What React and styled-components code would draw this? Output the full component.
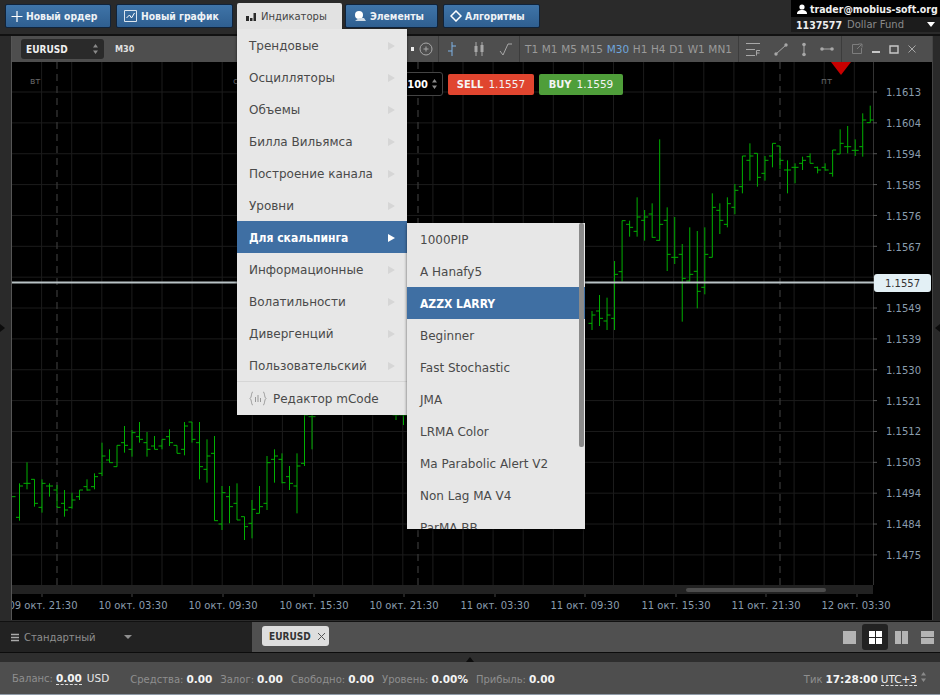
import React from "react";
import styled, { createGlobalStyle } from "styled-components";

const GlobalStyle = createGlobalStyle`
  html, body { margin: 0; padding: 0; background: #2b2b2b; }
  body { font-family: "DejaVu Sans", "Liberation Sans", sans-serif; }
`;

const boldFont = `"DejaVu Sans Condensed", "DejaVu Sans", sans-serif`;

// [high, low, open, close] measured on the picture
const leftBars = [
  [320, 320, 320, 320], [280, 392, 382, 288], [217, 298, 280, 280], [268, 350, 268, 340], [268, 368, 352, 280],
  [280, 320, 288, 288], [285, 352, 300, 352], [300, 380, 340, 360], [308, 356, 352, 330], [300, 330, 320, 300],
  [268, 302, 290, 300], [250, 298, 290, 260], [158, 258, 250, 198], [178, 218, 210, 218], [166, 230, 230, 166],
  [108, 188, 158, 166], [120, 200, 178, 128], [96, 158, 140, 148], [126, 200, 158, 178], [138, 178, 168, 178],
  [148, 178, 168, 148], [118, 168, 140, 158], [166, 190, 166, 190], [96, 196, 178, 108], [96, 158, 96, 148],
  [96, 268, 158, 230], [148, 278, 238, 198], [138, 392, 190, 392], [288, 420, 402, 308], [288, 400, 320, 350],
];
const midBars = [
  [820, 930, 880, 930], [920, 990, 920, 950], [870, 985, 940, 898], [828, 910, 910, 890], [738, 900, 880, 758],
  [718, 818, 748, 738], [730, 820, 748, 818], [768, 840, 800, 820], [730, 910, 828, 768], [610, 768, 760, 615],
  [610, 718, 620, 620],
];
const rightBars = [
  [663, 720, 700, 675], [615, 708, 663, 685], [623, 720, 693, 675], [513, 720, 685, 553], [392, 575, 545, 392],
  [392, 440, 403, 412], [322, 440, 424, 381], [360, 452, 391, 381], [340, 443, 372, 442], [148, 452, 451, 403],
  [352, 543, 391, 493], [381, 522, 502, 502], [462, 695, 493, 565], [412, 575, 573, 553], [423, 655, 544, 604],
  [412, 613, 592, 493], [310, 502, 502, 352], [340, 432, 361, 391], [322, 412, 403, 341], [282, 373, 352, 301],
  [198, 310, 290, 198], [160, 272, 211, 198], [190, 290, 190, 262], [198, 272, 250, 211], [160, 232, 198, 160],
  [168, 238, 168, 211], [211, 310, 240, 240], [220, 280, 232, 232], [200, 240, 220, 211], [190, 220, 200, 220],
  [230, 250, 232, 240], [220, 242, 232, 240], [180, 260, 250, 180], [118, 192, 192, 160], [108, 190, 170, 170],
  [148, 198, 181, 181], [70, 200, 170, 90], [47, 98, 98, 90],
];

const toBars = (list, x0, step, y0) =>
  list.map((b) => b.map((v) => y0 + v / 3)).map((b, i) => ({ x: x0 + step * i, b }));

const allBars = [
  ...toBars(leftBars, 12, 7.5, 390),
  ...toBars(midBars, 237, 7.5, 210),
  ...toBars(rightBars, 592, 7.52, 90),
  { x: 396, b: [413, 420, 415, 415] },
  { x: 403.5, b: [413, 425, 415, 415] },
];

const prices = [
  ["1.1613", 92], ["1.1604", 123], ["1.1594", 154], ["1.1585", 185], ["1.1576", 216], ["1.1567", 247],
  ["1.1549", 308], ["1.1539", 339], ["1.1530", 370], ["1.1521", 401], ["1.1512", 431], ["1.1503", 462],
  ["1.1494", 493], ["1.1484", 524], ["1.1475", 555],
];
const times = [
  ["09 окт. 21:30", 43], ["10 окт. 03:30", 133], ["10 окт. 09:30", 223], ["10 окт. 15:30", 314], ["10 окт. 21:30", 404],
  ["11 окт. 03:30", 495], ["11 окт. 09:30", 585], ["11 окт. 15:30", 676], ["11 окт. 21:30", 766], ["12 окт. 03:30", 856],
];
const gridX = Array.from({ length: 29 }, (_, i) => 11.5 + i * 30.1);
const gridY = Array.from({ length: 16 }, (_, i) => 92 + i * 30.86);
const timeframes = ["T1", "M1", "M5", "M15", "M30", "H1", "H4", "D1", "W1", "MN1"];
const mainItems = ["Трендовые", "Осцилляторы", "Объемы", "Билла Вильямса", "Построение канала", "Уровни", "Для скальпинга", "Информационные", "Волатильности", "Дивергенций", "Пользовательский"];
const subItems = ["1000PIP", "A Hanafy5", "AZZX LARRY", "Beginner", "Fast Stochastic", "JMA", "LRMA Color", "Ma Parabolic Alert V2", "Non Lag MA V4", "ParMA BB"];

const Page = styled.div`
  position: relative;
  width: 940px;
  height: 695px;
  overflow: hidden;
  display: flex;
  flex-direction: column;
  background: #2b2b2b;
`;

const TopBar = styled.div`
  height: 34px;
  display: flex;
  align-items: flex-start;
  padding-left: 5px;
  background: #2a2a2a;
  border-bottom: 2px solid #111;
`;

const TopButton = styled.div`
  box-sizing: border-box;
  width: ${(p) => p.$w}px;
  margin: 4px ${(p) => p.$gap || 0}px 0 0;
  height: 24px;
  display: flex;
  align-items: center;
  gap: 3px;
  padding-left: ${(p) => p.$pad || 6}px;
  font-family: ${boldFont};
  font-size: 10.3px;
  font-weight: 700;
  white-space: nowrap;
  color: #eef2f6;
  background: linear-gradient(#3f74a8, #2f5f90);
  border: 1px solid #10233a;
  border-radius: 2px;
`;

const OpenButton = styled(TopButton)`
  background: #e2e2e2;
  border: none;
  border-radius: 2px 2px 0 0;
  margin-top: 3px;
  height: 26px;
  gap: 4px;
  font-family: "DejaVu Sans", sans-serif;
  font-size: 10px;
  font-weight: 400;
  color: #444;
  position: relative;
  z-index: 6;
`;

const Account = styled.div`
  margin-left: auto;
  width: 149px;
  height: 32px;
  background: #1c1c1c;
  color: #f0f0f0;
  font-family: ${boldFont};
`;

const AccountMail = styled.div`
  height: 17px;
  display: flex;
  align-items: center;
  gap: 3px;
  padding-left: 6px;
  background: #000;
  font-weight: 700;
  font-size: 10.5px;
  white-space: nowrap;
`;

const AccountRow = styled.div`
  height: 15px;
  display: flex;
  align-items: center;
  padding: 0 5px;
  gap: 5px;
  font-size: 10.5px;
  white-space: nowrap;
  b { color: #eee; }
  span { color: #8a8a8a; font-family: "DejaVu Sans", sans-serif; font-size: 10px; }
  i { margin-left: auto; width: 0; height: 0; border: 4px solid transparent; border-top: 5px solid #fff; border-bottom: 0; }
`;

const Middle = styled.div`
  flex: 1;
  display: flex;
  min-height: 0;
`;

const Strip = styled.div`
  width: ${(p) => p.$w}px;
  flex: none;
  background: #2a2a2a;
  display: flex;
  align-items: center;
  justify-content: ${(p) => (p.$right ? "flex-end" : "flex-start")};
  border-right: ${(p) => (p.$right ? "none" : "1px solid #555")};
  border-left: ${(p) => (p.$right ? "1px solid #444" : "none")};
  box-sizing: border-box;
  height: 584px;
`;

const StripArrow = styled.i`
  width: 0;
  height: 0;
  border: 4px solid transparent;
  ${(p) => (p.$right ? "border-right: 5px solid #0c0c0c; border-left: 0;" : "border-left: 5px solid #0c0c0c; border-right: 0;")}
`;

const Window = styled.div`
  flex: 1;
  display: flex;
  flex-direction: column;
  position: relative;
`;

const Toolbar = styled.div`
  height: 26px;
  display: flex;
  align-items: center;
  background: #4e4e4e;
  color: #9d9d9d;
  font-size: 11px;
`;

const SymbolSelect = styled.div`
  box-sizing: border-box;
  width: 83px;
  height: 20px;
  margin-left: 9px;
  padding: 0 5px;
  display: flex;
  align-items: center;
  justify-content: space-between;
  background: #2a2a2a;
  border-radius: 3px;
  color: #f0f0f0;
  font-family: ${boldFont};
  font-size: 10px;
  font-weight: 700;
`;

const Period = styled.div`
  margin-left: 11px;
  font-family: ${boldFont};
  font-size: 9px;
  font-weight: 700;
  color: #e0e0e0;
`;

const ToolGroup = styled.div`
  box-sizing: border-box;
  width: ${(p) => p.$w}px;
  height: 26px;
  display: flex;
  align-items: center;
  justify-content: ${(p) => p.$justify || "space-around"};
  border-left: ${(p) => (p.$plain ? "none" : "1px solid #3c3c3c")};
  margin-left: ${(p) => (p.$auto ? "auto" : 0)};
  padding: ${(p) => p.$pad || "0"};
`;

const Frame = styled.span`
  font-size: 10.5px;
  color: ${(p) => (p.$active ? "#6fa6dc" : "#9a9a9a")};
`;

const Chart = styled.svg`
  display: block;
  width: 920px;
  height: 558px;
  background: #000;
`;

const OrderWidget = styled.div`
  position: absolute;
  left: 338px;
  top: 36px;
  display: flex;
  align-items: center;
  gap: 5px;
  font-family: ${boldFont};
  font-size: 11px;
  font-weight: 700;
  color: #fff;
`;

const Amount = styled.div`
  box-sizing: border-box;
  width: 93px;
  height: 24px;
  display: flex;
  align-items: center;
  justify-content: flex-end;
  gap: 3px;
  padding-right: 4px;
  background: #000;
  border: 1px solid #444;
  border-radius: 3px;
`;

const TradeButton = styled.div`
  box-sizing: border-box;
  width: ${(p) => p.$w}px;
  height: 21px;
  display: flex;
  align-items: center;
  justify-content: center;
  gap: 5px;
  background: ${(p) => p.$color};
  border-radius: 2px;
  color: #f4f4f4;
  span { font-weight: 400; font-family: "DejaVu Sans", sans-serif; font-size: 10.5px; }
`;

const PriceTag = styled.div`
  position: absolute;
  left: 862px;
  top: 238px;
  width: 57px;
  height: 18px;
  display: flex;
  align-items: center;
  justify-content: center;
  background: #e3f0f5;
  border-radius: 3px;
  font-size: 10px;
  color: #333;
`;

const Menu = styled.div`
  position: absolute;
  z-index: 5;
  left: ${(p) => p.$left}px;
  top: ${(p) => p.$top}px;
  width: ${(p) => p.$w}px;
  height: ${(p) => p.$h}px;
  background: #e7e7e7;
  box-shadow: 0 1px 3px rgba(0, 0, 0, 0.6);
  overflow: hidden;
  font-size: 12px;
  color: #4a4a4a;
`;

const MenuItem = styled.div`
  height: 32px;
  display: flex;
  align-items: center;
  padding: 2px 12px 0 ${(p) => p.$pad}px;
  justify-content: space-between;
  box-sizing: border-box;
  background: ${(p) => (p.$active ? "#3f6fa3" : "transparent")};
  color: ${(p) => (p.$active ? "#fff" : "#4a4a4a")};
  font-family: ${(p) => (p.$active ? boldFont : "inherit")};
  font-weight: ${(p) => (p.$active ? 700 : 400)};
`;

const Arrow = styled.i`
  width: 0;
  height: 0;
  border: 4px solid transparent;
  border-left: 7px solid ${(p) => (p.$active ? "#fff" : "#d6d6d6")};
  border-right: 0;
`;

const MenuFooter = styled.div`
  height: 33px;
  display: flex;
  align-items: center;
  gap: 6px;
  padding-left: 12px;
  border-top: 1px solid #d6d6d6;
`;

const SubScroll = styled.div`
  position: absolute;
  right: 1px;
  top: 0;
  width: 5px;
  height: 224px;
  background: #8a8a8a;
  border-radius: 2px;
`;

const TabBar = styled.div`
  height: 31px;
  display: flex;
  border-top: 1px solid #111;
  box-sizing: border-box;
  background: #505050;
`;

const Workspace = styled.div`
  width: 252px;
  display: flex;
  align-items: center;
  gap: 5px;
  padding-left: 11px;
  box-sizing: border-box;
  background: #222;
  color: #8f8f8f;
  font-size: 10px;
  i { margin-left: 23px; width: 0; height: 0; border: 4px solid transparent; border-top: 4px solid #8f8f8f; border-bottom: 0; }
`;

const Tab = styled.div`
  box-sizing: border-box;
  width: 67px;
  height: 20px;
  margin: 4px 0 0 10px;
  padding-left: 7px;
  display: flex;
  align-items: center;
  gap: 6px;
  background: #dedede;
  border-radius: 3px;
  font-family: ${boldFont};
  font-size: 10px;
  font-weight: 700;
  color: #333;
`;

const LayoutButtons = styled.div`
  margin-left: auto;
  display: flex;
  align-items: center;
`;

const LayoutButton = styled.div`
  width: 26px;
  height: 26px;
  display: flex;
  align-items: center;
  justify-content: center;
  border-radius: 3px;
  background: ${(p) => (p.$active ? "#222" : "transparent")};
`;

const Divider = styled.div`
  height: 10px;
  background: #2e2e2e;
  border-top: 1px solid #0c0c0c;
  box-sizing: border-box;
  display: flex;
  justify-content: center;
  align-items: flex-end;
  i { width: 0; height: 0; border: 4px solid transparent; border-bottom: 5px solid #0c0c0c; border-top: 0; }
`;

const StatusBar = styled.div`
  height: 33px;
  display: flex;
  align-items: center;
  padding: 1px 0 0 12px;
  box-sizing: border-box;
  background: #4e4e4e;
  border-bottom: 1px solid #8f9aa6;
  font-size: 10px;
  color: #8f8f8f;
`;

const Stat = styled.div`
  display: flex;
  align-items: baseline;
  gap: 3px;
  margin-right: ${(p) => p.$gap || 8}px;
  margin-left: ${(p) => (p.$push ? "auto" : 0)};
  b { color: #f4f4f4; font-size: 10.5px; }
`;

const Dashed = styled.b`
  border-bottom: 1px dashed #ddd;
  font-weight: ${(p) => (p.$thin ? 400 : 700)};
  color: #f4f4f4;
`;

const Unit = styled.span`
  margin-left: 2px;
  color: #e8e8e8;
  font-size: 10.5px;
`;

const Spinner = () => (
  <svg width="7" height="12" viewBox="0 0 7 12">
    <path d="M3.5 1L6 4.5H1zM3.5 11L1 7.5h5z" fill="#8a8a8a" />
  </svg>
);

const stroke = { fill: "none", stroke: "#a8a8a8", strokeWidth: 1 };

const App = () => (
  <Page>
    <GlobalStyle />
    <TopBar>
      <TopButton $w={106} $gap={5} $pad={5}>
        <svg width="12" height="14" viewBox="0 0 12 14"><path d="M6 2v11M.5 7.500h11" stroke="#fff" strokeWidth="1.2" /></svg>
        Новый ордер
      </TopButton>
      <TopButton $w={117} $gap={4} $pad={7}>
        <svg width="14" height="13" viewBox="0 0 14 13"><path d="M.5.5h12v11H.5z" fill="none" stroke="#dde6ee" /><path d="M2.5 8l3-3 2 3 3-5" fill="none" stroke="#fff" /></svg>
        Новый график
      </TopButton>
      <OpenButton $w={105} $gap={3} $pad={8}>
        <svg width="12" height="12" viewBox="0 0 12 12"><path d="M1 6h3v5H1zM5 8h2.5v3H5zM8.500 3H11v8H8.500z" fill="#2a2a2a" /></svg>
        Индикаторы
      </OpenButton>
      <TopButton $w={93} $gap={5} $pad={7}>
        <svg width="14" height="13" viewBox="0 0 14 13"><circle cx="6" cy="5" r="4" fill="#fff" /><path d="M2 11h11l-2-3H6z" fill="#cfdbe6" /></svg>
        Элементы
      </TopButton>
      <TopButton $w={97} $pad={6}>
        <svg width="12" height="12" viewBox="0 0 12 12"><path d="M6 1l5 5-5 5-5-5z" fill="none" stroke="#fff" strokeWidth="1.5" /></svg>
        Алгоритмы
      </TopButton>
      <Account>
        <AccountMail>
          <svg width="10" height="10" viewBox="0 0 10 10"><circle cx="5" cy="3" r="2.6" fill="#fff" /><path d="M0 10c0-3 2-4 5-4s5 1 5 4z" fill="#fff" /></svg>
          trader@mobius-soft.org
        </AccountMail>
        <AccountRow>
          <b>1137577</b>
          <span>Dollar Fund</span>
          <i />
        </AccountRow>
      </Account>
    </TopBar>
    <Middle>
      <Strip $w={12}><StripArrow /></Strip>
      <Window>
        <Toolbar>
          <SymbolSelect>EURUSD <Spinner /></SymbolSelect>
          <Period>M30</Period>
          <ToolGroup $auto $plain $w={30} $justify="flex-start">
            <svg width="30" height="16" viewBox="0 0 30 16">
              <path d="M3 6h3v4H3z" fill="#eee" />
              <circle cx="18" cy="8" r="6" {...stroke} />
              <path d="M18 5.500v5M15.500 8h5" {...stroke} />
            </svg>
          </ToolGroup>
          <ToolGroup $w={81}>
            <svg width="14" height="16" viewBox="0 0 14 16"><path d="M7 1v14M3 10h4M7 5h4" fill="none" stroke="#7fb2e5" /></svg>
            <svg width="14" height="16" viewBox="0 0 14 16"><path d="M4 1v14M10 1v14" stroke="#a8a8a8" /><path d="M2.500 5h3v6h-3zM8.500 4h3v7h-3z" fill="#a8a8a8" /></svg>
            <svg width="14" height="16" viewBox="0 0 14 16"><path d="M1 10l3 4 5-11h4" {...stroke} /></svg>
          </ToolGroup>
          <ToolGroup $w={219} $pad="0 6px 0 5px" $justify="space-between">
            {timeframes.map((t) => (
              <Frame key={t} $active={t === "M30"}>{t}</Frame>
            ))}
          </ToolGroup>
          <ToolGroup $w={103} $pad="0 7px 0 6px" $justify="space-between">
            <svg width="16" height="15" viewBox="0 0 16 15"><path d="M1 1.500h14M1 7.500h9M1 13.500h9" {...stroke} /><path d="M11.500 13.500v-5h3.500M11.500 11h3" {...stroke} /></svg>
            <svg width="16" height="15" viewBox="0 0 16 15"><path d="M3 12l10-9" {...stroke} /><circle cx="3" cy="12" r="1.700" fill="#a8a8a8" /><circle cx="13" cy="3" r="1.700" fill="#a8a8a8" /></svg>
            <svg width="8" height="15" viewBox="0 0 8 15"><path d="M4 2v11" {...stroke} /><circle cx="4" cy="2.500" r="1.800" fill="#a8a8a8" /><circle cx="4" cy="12.500" r="1.800" fill="#a8a8a8" /></svg>
            <svg width="14" height="8" viewBox="0 0 14 8"><path d="M2 4h10" {...stroke} /><circle cx="2" cy="4" r="1.800" fill="#a8a8a8" /><circle cx="12" cy="4" r="1.800" fill="#a8a8a8" /></svg>
          </ToolGroup>
          <ToolGroup $w={91} $pad="0 15px 0 9px" $justify="space-between">
            <svg width="12" height="12" viewBox="0 0 12 12"><path d="M8 1.500H1.500v9h9V5M6 6l5-5M7.500 1H11v3.500" fill="none" stroke="#7d7d7d" /></svg>
            <svg width="10" height="10" viewBox="0 0 10 10"><path d="M1 8h8" stroke="#c8c8c8" strokeWidth="2" /></svg>
            <svg width="10" height="10" viewBox="0 0 10 10"><path d="M1 2h8v7H1z" fill="none" stroke="#c8c8c8" strokeWidth="1.400" /></svg>
            <svg width="10" height="10" viewBox="0 0 10 10"><path d="M1.500 1.500l7 7M8.500 1.500l-7 7" stroke="#a8a8a8" /></svg>
          </ToolGroup>
        </Toolbar>
        <Chart viewBox="12 62 920 558">
          {gridX.map((x) => <path key={x} d={`M${x} 62V585`} stroke="#1c1c1c" />)}
          {gridY.map((y) => <path key={y} d={`M12 ${y}H873`} stroke="#1c1c1c" />)}
          {[57, 418, 780].map((x) => <path key={x} d={`M${x} 62V585`} stroke="#3a3a3a" strokeDasharray="7 5" strokeWidth="1.200" />)}
          <path d="M873.500 62V585" stroke="#333" />
          {gridY.map((y) => <path key={y} d={`M873 ${y}h4`} stroke="#555" />)}
          {allBars.map(({ x, b }) => (
            <path key={`${x}-${b[0]}`} d={`M${x} ${b[0]}V${b[1]}M${x - 3.500} ${b[2]}H${x}M${x} ${b[3]}H${x + 3.500}`} stroke="#00b000" fill="none" />
          ))}
          <path d="M12 282.500H874" stroke="#b9c3c6" strokeWidth="2" />
          <path d="M831 62h20l-10 13z" fill="#c80000" />
          <text x="30" y="84" fill="#666" fontSize="9">вт</text>
          <text x="233" y="84" fill="#666" fontSize="9">ср</text>
          <text x="821" y="84" fill="#666" fontSize="9">пт</text>
          <rect x="12" y="585" width="861" height="9" fill="#222" />
          <rect x="686" y="588" width="140" height="4" rx="2" fill="#4d4d4d" />
          {[42, 132, 223, 314, 404, 495, 585, 676, 766, 857].map((x) => <path key={x} d={`M${x} 594v3`} stroke="#444" />)}
          {prices.map(([p, y]) => (
            <text key={p} x="886" y={y + 4} fill="#8a9dae" fontSize="10">{p}</text>
          ))}
          {times.map(([t, x]) => (
            <text key={t} x={x} y="609" fill="#8a9dae" fontSize="10" textAnchor="middle">{t}</text>
          ))}
        </Chart>
        <OrderWidget>
          <Amount>0.0100 <Spinner /></Amount>
          <TradeButton $w={86} $color="#e0452f">SELL <span>1.1557</span></TradeButton>
          <TradeButton $w={84} $color="#4f9e3a">BUY <span>1.1559</span></TradeButton>
        </OrderWidget>
        <PriceTag>1.1557</PriceTag>
      </Window>
      <Strip $w={8} $right><StripArrow $right /></Strip>
    </Middle>
    <TabBar>
      <Workspace>
        <svg width="8" height="9" viewBox="0 0 8 9"><path d="M0 1.500h8M0 4.500h8M0 7.500h8" stroke="#aaa" strokeWidth="1.400" /></svg>
        Стандартный
        <i />
      </Workspace>
      <Tab>
        EURUSD
        <svg width="9" height="9" viewBox="0 0 9 9"><path d="M1 1l7 7M8 1L1 8" stroke="#555" /></svg>
      </Tab>
      <LayoutButtons>
        <LayoutButton><svg width="13" height="13" viewBox="0 0 13 13"><path d="M0 0h13v13H0z" fill="#b4b4b4" /></svg></LayoutButton>
        <LayoutButton $active><svg width="13" height="13" viewBox="0 0 13 13"><path d="M0 0h6v6H0zM7 0h6v6H7zM0 7h6v6H0zM7 7h6v6H7z" fill="#fff" /></svg></LayoutButton>
        <LayoutButton><svg width="13" height="13" viewBox="0 0 13 13"><path d="M0 0h6v13H0zM7 0h6v13H7z" fill="#b4b4b4" /></svg></LayoutButton>
        <LayoutButton><svg width="13" height="13" viewBox="0 0 13 13"><path d="M0 0h13v6H0zM0 7h13v6H0z" fill="#b4b4b4" /></svg></LayoutButton>
      </LayoutButtons>
    </TabBar>
    <Divider><i /></Divider>
    <StatusBar>
      <Stat $gap={21}>Баланс: <Dashed>0.00</Dashed> <Unit>USD</Unit></Stat>
      <Stat>Средства: <b>0.00</b></Stat>
      <Stat>Залог: <b>0.00</b></Stat>
      <Stat>Свободно: <b>0.00</b></Stat>
      <Stat>Уровень: <b>0.00%</b></Stat>
      <Stat>Прибыль: <b>0.00</b></Stat>
      <Stat $push $gap={13}>Тик <b>17:28:00</b> <Dashed $thin>UTC+3</Dashed> <Spinner /></Stat>
    </StatusBar>
    <Menu $left={237} $top={29} $w={170} $h={386}>
      {mainItems.map((m, i) => (
        <MenuItem key={m} $pad={12} $active={i === 6}>{m}<Arrow $active={i === 6} /></MenuItem>
      ))}
      <MenuFooter>
        <svg width="18" height="15" viewBox="0 0 18 15"><path d="M4 1C2 1 3 6 1 7.500 3 9 2 14 4 14M14 1c2 0 1 5 3 6.500-2 1.500-1 6.500-3 6.500M6.500 6v5M9 4v7M11.500 7v4" fill="none" stroke="#999" /></svg>
        Редактор mCode
      </MenuFooter>
    </Menu>
    <Menu $left={407} $top={223} $w={178} $h={306}>
      {subItems.map((m, i) => (
        <MenuItem key={m} $pad={13} $active={i === 2}>{m}</MenuItem>
      ))}
      <SubScroll />
    </Menu>
  </Page>
);

export default App;
